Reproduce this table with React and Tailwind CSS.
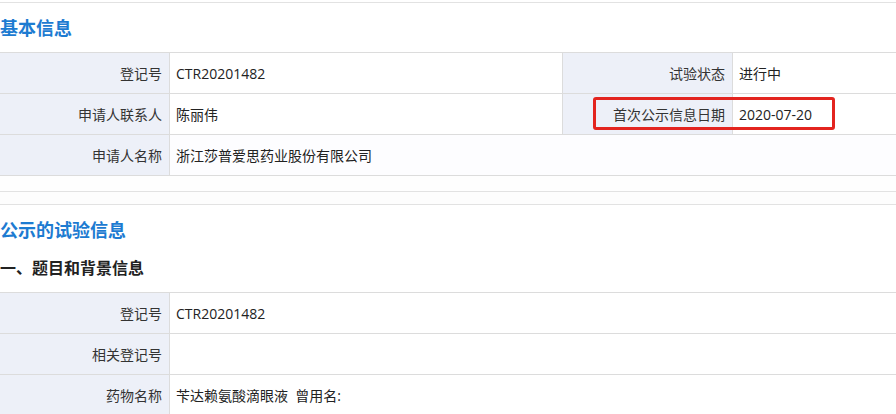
import React from 'react';

const font = { fontFamily: '"Open Sans", "Noto Sans CJK SC", "Liberation Sans", sans-serif' };

function Label({ children, className = '' }) {
  return (
    <div className={`w-[170px] shrink-0 bg-[#edf0f8] border-r border-[#dcdcdc] flex items-center justify-end pr-[7px] text-[14px] text-[#333] ${className}`}>
      {children}
    </div>
  );
}

function Value({ children, className = '' }) {
  return (
    <div className={`flex items-center pl-[6px] text-[14px] text-[#222] ${className}`}>
      {children}
    </div>
  );
}

export default function App() {
  return (
    <div style={font} className="w-[896px] h-[414px] overflow-hidden bg-white">
      <div className="h-[2px]" />
      <div className="border-t border-[#e2e2e2] h-[50px] flex items-center">
        <h2 className="text-[18px] font-bold text-[#1d7bd1] leading-none">基本信息</h2>
      </div>

      <div className="border-b border-[#dcdcdc]">
        <div className="flex h-[41px] border-t border-[#dcdcdc]">
          <Label>登记号</Label>
          <Value className="w-[393px] border-r border-[#dcdcdc]">CTR20201482</Value>
          <Label>试验状态</Label>
          <Value className="flex-1">进行中</Value>
        </div>
        <div className="relative flex h-[41px] border-t border-[#dcdcdc]">
          <Label>申请人联系人</Label>
          <Value className="w-[393px] border-r border-[#dcdcdc]">陈丽伟</Value>
          <Label>首次公示信息日期</Label>
          <Value className="flex-1">2020-07-20</Value>
          <div className="absolute left-[593px] top-[3px] w-[242px] h-[33px] border-[3px] border-[#e3241f] rounded-[3px]" />
        </div>
        <div className="flex h-[41px] border-t border-[#dcdcdc]">
          <Label>申请人名称</Label>
          <Value className="flex-1 bg-[#fdfdff]">浙江莎普爱思药业股份有限公司</Value>
        </div>
      </div>

      <div className="h-[15px] bg-[#fefefe]" />
      <div className="h-[13px] border-t border-[#e2e2e2] bg-[#fdfdfd]" />
      <div className="border-t border-[#e2e2e2] h-[50px] flex items-center">
        <h2 className="text-[18px] font-bold text-[#1d7bd1] leading-none">公示的试验信息</h2>
      </div>
      <div className="h-[38px] pt-[6px]">
        <h3 className="text-[16px] font-bold text-[#222] leading-none">一、题目和背景信息</h3>
      </div>

      <div>
        <div className="flex h-[41px] border-t border-[#dcdcdc]">
          <Label>登记号</Label>
          <Value className="flex-1">CTR20201482</Value>
        </div>
        <div className="flex h-[41px] border-t border-[#dcdcdc]">
          <Label>相关登记号</Label>
          <Value className="flex-1" />
        </div>
        <div className="flex h-[41px] border-t border-[#dcdcdc]">
          <Label>药物名称</Label>
          <Value className="flex-1 whitespace-pre">苄达赖氨酸滴眼液  曾用名:</Value>
        </div>
      </div>
    </div>
  );
}
